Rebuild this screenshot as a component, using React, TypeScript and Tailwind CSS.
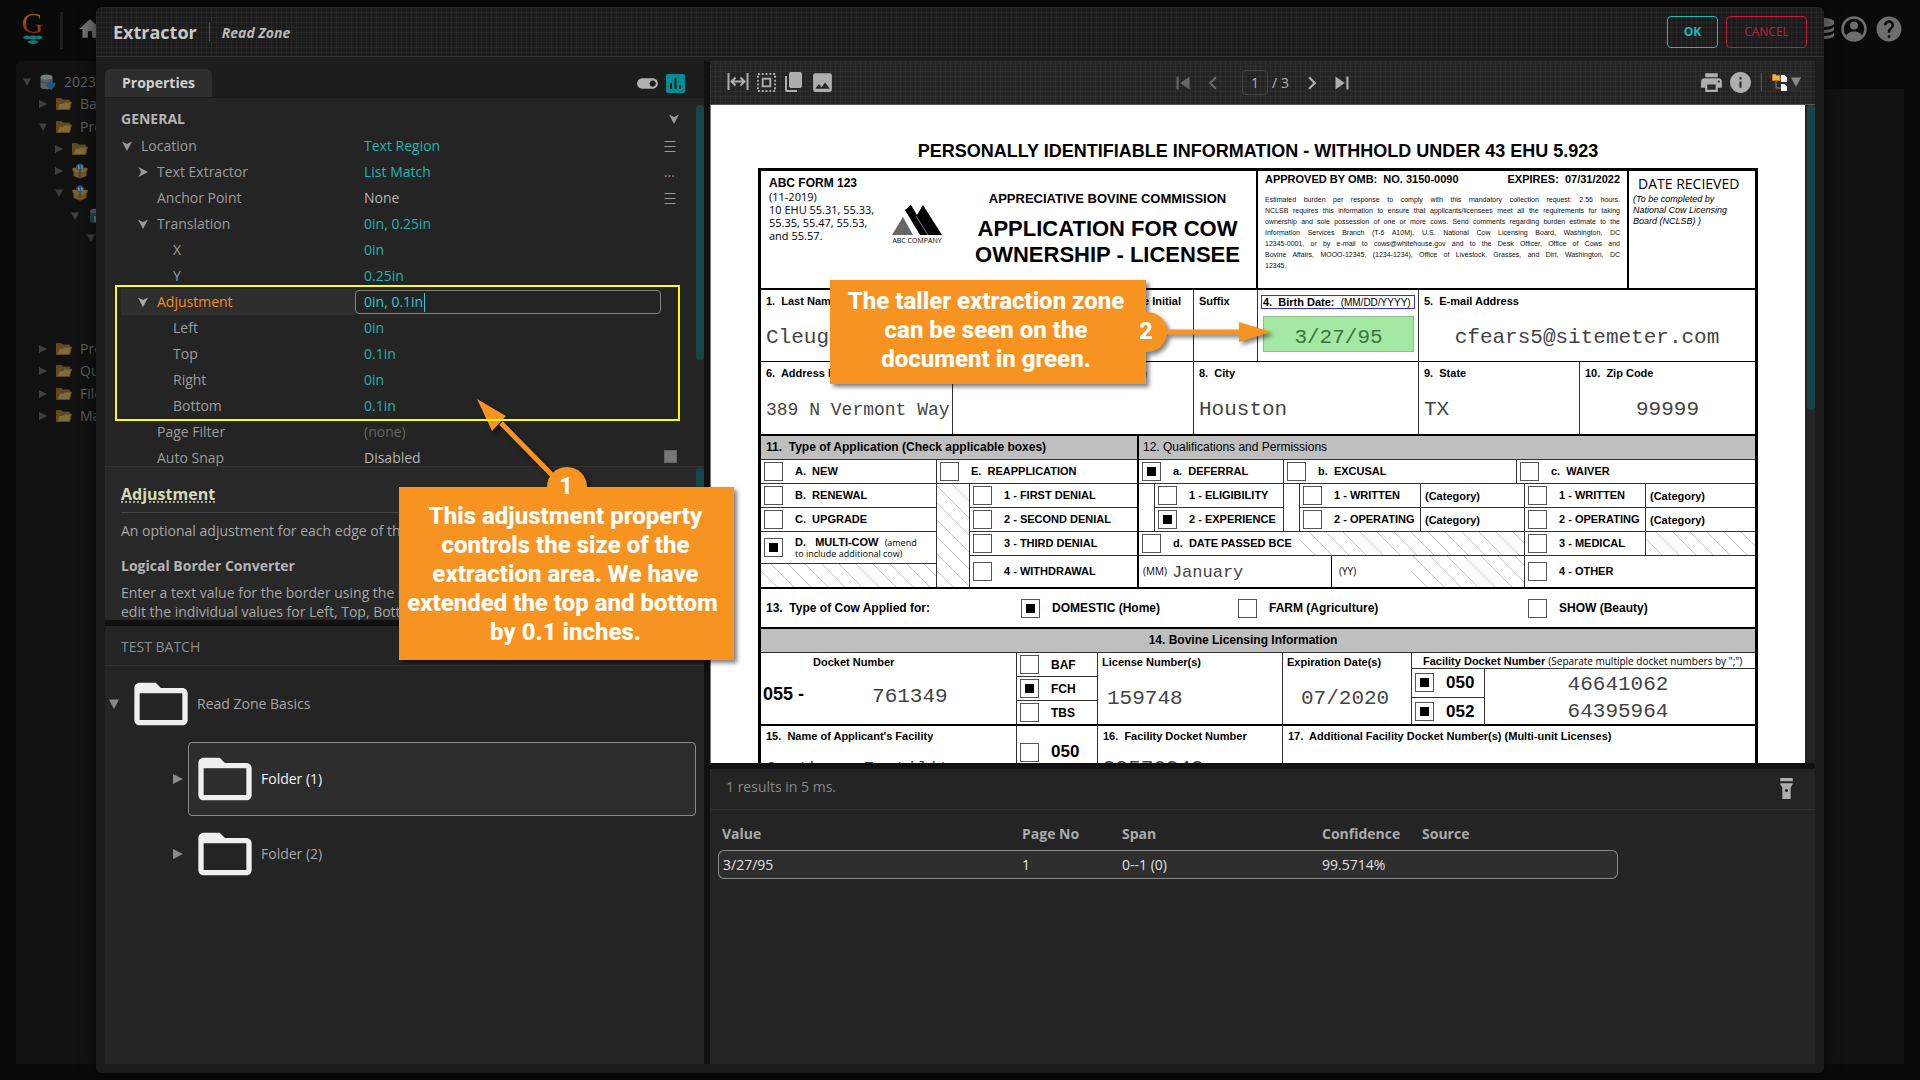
import React from "react";
import {
  MdFolderOpen,
  MdHome,
  MdPrint,
  MdInfo,
  MdHelp,
  MdImage,
  MdSkipPrevious,
  MdSkipNext,
  MdChevronLeft,
  MdChevronRight,
  MdToggleOn,
  MdFlashlightOn,
} from "react-icons/md";

const TEXTURE =
  "bg-[linear-gradient(to_right,rgba(255,255,255,0.035)_1px,transparent_1px),linear-gradient(to_bottom,rgba(255,255,255,0.035)_1px,transparent_1px)] bg-[size:5px_5px]";

const ARIAL = "font-['Liberation_Sans',Arial,sans-serif]";
const MONO = "font-['Liberation_Mono',monospace] text-[#444]";

/* ---------- small drawings ---------- */

function Arrow({ open = true }: { open?: boolean }) {
  return (
    <svg width="10" height="10" viewBox="0 0 10 10" fill="currentColor" className="shrink-0">
      {open ? <path d="M0 0.5 5 3 10 0.5 5 10Z" /> : <path d="M0.5 0 3 5 0.5 10 10 5Z" />}
    </svg>
  );
}

function Triangle({ open, small }: { open: boolean; small?: boolean }) {
  const size = small ? 8 : 10;
  return (
    <svg width={size} height={size} viewBox="0 0 10 10" fill="currentColor" className="shrink-0">
      {open ? <path d="M0 0.5H10L5 10Z" /> : <path d="M0 0 10 5 0 10Z" />}
    </svg>
  );
}

function YellowFolder() {
  return (
    <svg width="16" height="16" viewBox="0 0 16 16" className="shrink-0">
      <path d="M0.5 2.5h5l1 1.5h7v9.500h-13z" fill="#5e4a28" stroke="#69451a" />
      <path d="M1 13.500 3.500 7.500H7l1-1.500h7.500l-2 7.500z" fill="#7d6c3c" stroke="#69451a" />
    </svg>
  );
}

function PackageIcon() {
  return (
    <svg width="16" height="16" viewBox="0 0 16 16" className="shrink-0">
      <circle cx="8" cy="4.500" r="4" fill="#2a5572" />
      <path d="M6 3h1v3M9 3h1v3" stroke="#8aa" fill="none" />
      <path d="M1.500 7.500 8 9.500l6.500-2v5.500L8 15.500 1.500 13z" fill="#74572a" />
      <path d="M0.500 5 3 4.500 8 8.500 5.500 10 0.500 7.500zM15.500 5 13 4.500 8 8.500l2.500 1.500 5-2.500z" fill="#846431" />
      <path d="M8 9v6.500" stroke="#4a3517" />
    </svg>
  );
}

function RootIcon() {
  return (
    <svg width="16" height="16" viewBox="0 0 16 16" className="shrink-0">
      <path d="M0.500 3v10c0 3 12 3 12 0V3z" fill="#5d6264" />
      <ellipse cx="6.500" cy="3" rx="6" ry="2.500" fill="#777e81" />
      <path d="M1 7.500c2 2 9 2 11 0" stroke="#3c4042" fill="none" />
      <path d="m8 8 5 5M7 11l4-3 3 3-3 4zM13 11l2-2" stroke="#23557f" strokeWidth="2" fill="#23557f" />
    </svg>
  );
}

function DatabaseIcon() {
  return (
    <svg width="18" height="16" viewBox="0 0 16 16" className="shrink-0">
      <path d="M1 3v10c0 3 13 3 13 0V3z" fill="#27424f" />
      <ellipse cx="7.500" cy="3" rx="6.500" ry="2.500" fill="#54666e" />
      <path d="M5 8h6v6H5z" fill="#6d7a80" />
      <path d="M8 7l4 3" stroke="#8b3c2c" strokeWidth="2" />
    </svg>
  );
}

function FitWidthIcon() {
  return (
    <svg width="22" height="22" viewBox="0 0 22 22" fill="none" stroke="currentColor" strokeWidth="2">
      <path d="M1.500 2v17M20.500 2v17M5 10.500h12M8.500 6.500 4.500 10.500l4 4M13.500 6.500l4 4-4 4" />
    </svg>
  );
}

function SelectRegionIcon() {
  return (
    <svg width="19" height="19" viewBox="0 0 20 20" fill="none" stroke="currentColor" strokeWidth="2">
      <rect x="1" y="1" width="18" height="18" strokeDasharray="2 2" />
      <rect x="6" y="6" width="8" height="8" />
    </svg>
  );
}

function CopyIcon() {
  return (
    <svg width="20" height="22" viewBox="0 0 20 22" fill="currentColor">
      <rect x="5" y="1" width="13" height="16" rx="2" />
      <path d="M1 5h2v14h10v2H3a2 2 0 0 1-2-2z" />
    </svg>
  );
}

function TreeViewIcon() {
  return (
    <svg width="16" height="18" viewBox="0 0 16 18">
      <path d="M4 7v8h5M4 5.500h5" stroke="#888" fill="none" />
      <path d="M0.500 1.500h3l1 1H8v5H0.500z" fill="#e9b44c" stroke="#c77f1d" />
      <path d="M9 2h3.500L15 4.500V9H9zM9 11h3.500L15 13.500V18H9z" fill="#f4f4f4" />
    </svg>
  );
}

function UserIcon() {
  return (
    <svg width="26" height="26" viewBox="0 0 26 26">
      <circle cx="13" cy="13" r="11.500" fill="none" stroke="#6e6e6e" strokeWidth="2.500" />
      <circle cx="13" cy="9.500" r="4" fill="#6e6e6e" />
      <path d="M5 20c2-6 14-6 16 0-4 5-12 5-16 0z" fill="#6e6e6e" />
    </svg>
  );
}

/* ---------- page behind the dialog ---------- */

type Node = { level: number; open: boolean; icon?: "root" | "folder" | "pkg" | "db"; label: string } | null;

const NODES: Node[] = [
  { level: 0, open: true, icon: "root", label: "2023" },
  { level: 1, open: false, icon: "folder", label: "Batches" },
  { level: 1, open: true, icon: "folder", label: "Projects" },
  { level: 2, open: false, icon: "folder", label: "" },
  { level: 2, open: false, icon: "pkg", label: "" },
  { level: 2, open: true, icon: "pkg", label: "" },
  { level: 3, open: true, icon: "db", label: "" },
  { level: 4, open: true, label: "" },
  null,
  null,
  null,
  null,
  { level: 1, open: false, icon: "folder", label: "Processes" },
  { level: 1, open: false, icon: "folder", label: "Queues" },
  { level: 1, open: false, icon: "folder", label: "File Stores" },
  { level: 1, open: false, icon: "folder", label: "Machines" },
];

const INDENT = ["pl-0", "pl-4", "pl-8", "pl-12", "pl-16"];

function Backdrop() {
  return (
    <div className="flex h-full flex-col bg-[#0a0a0a] pb-4">
      <header className="flex h-[61px] shrink-0 items-start justify-between px-[18px]">
        <div className="flex items-start">
          <div className="ml-1 mt-2 flex w-[21px] flex-col items-center">
            <span className="h-[27px] bg-gradient-to-b from-[#a86a12] to-[#8f1c1c] bg-clip-text font-['Liberation_Serif',serif] text-[30px] leading-[30px] text-transparent">
              G
            </span>
            <svg width="20" height="9" viewBox="0 0 20 9" fill="#0b7f7c">
              <path d="M0 2.500C3 0 5 0 6.500 1.500 8 0 12 0 13.500 1.500 15 0 17 0 20 2.500 17 5 15 4.500 13.500 3.500 12 5 8 5 6.500 3.500 5 4.500 3 5 0 2.500zM4.500 7c3-2.500 8-2.500 11 0-3 2.500-8 2.500-11 0z" />
            </svg>
          </div>
          <div className="ml-[17px] mt-3 h-[37px] w-[3px] bg-[#1c1c1c]" />
          <MdHome size={26} className="ml-[14px] mt-4 text-[#707070]" />
        </div>
        <div className="mt-[14px] flex items-center gap-[9px]">
          <svg width="20" height="22" viewBox="0 0 20 22" fill="#6e6e6e" className="-mr-[2px]">
            <path d="M0 3c3-4 17-4 20 0v3c-3 4-17 4-20 0zM0 9c4 4 16 4 20 0v3c-3 4-17 4-20 0zM0 15c4 4 16 4 20 0v3c-3 4-17 4-20 0z" />
          </svg>
          <UserIcon />
          <MdHelp size={30} className="-mx-[2px] text-[#6e6e6e]" />
        </div>
      </header>
      <div className="flex min-h-0 flex-1 px-4">
        <nav className="w-[300px] rounded-tl-md bg-[#111] pl-[7px] pt-[10px]">
          <ul className="grid h-[356px] auto-rows-fr font-['Open_Sans',sans-serif] text-sm text-[#5f5f5f]">
            {NODES.map((n, i) => (
              <li key={i} className={"flex items-center " + (n ? INDENT[n.level] : "")}>
                {n && (
                  <>
                    <span className="mr-2 flex w-[9px] text-[#404040]">
                      <Triangle open={n.open} small />
                    </span>
                    {n.icon === "root" && <RootIcon />}
                    {n.icon === "folder" && <YellowFolder />}
                    {n.icon === "pkg" && <PackageIcon />}
                    {n.icon === "db" && <DatabaseIcon />}
                    <span className="ml-2 leading-5">{n.label}</span>
                  </>
                )}
              </li>
            ))}
          </ul>
        </nav>
        <div className="mt-7 flex-1 bg-[#111]" />
      </div>
    </div>
  );
}

/* ---------- property grid ---------- */

type RowProps = {
  label: string;
  value: string;
  level: number;
  arrow?: "open" | "closed";
  tone?: "set" | "plain" | "muted";
  end?: React.ReactNode;
};

const ROW_PAD = ["pl-0", "pl-4", "pl-8"];

function Row({ label, value, level, arrow, tone = "set", end }: RowProps) {
  const color = tone === "set" ? "text-[#1fb3b6]" : tone === "plain" ? "text-[#b4b4b4]" : "text-[#666]";
  return (
    <div className="flex h-[26px] items-center">
      <div className={"flex w-[243px] items-center " + ROW_PAD[level]}>
        <span className="flex w-5 pl-px text-[#999]">{arrow && <Arrow open={arrow === "open"} />}</span>
        <span className="text-[#9c9c9c]">{label}</span>
      </div>
      <span className={color}>{value}</span>
      <span className="ml-auto flex w-[18px] justify-start text-[#999]">{end}</span>
    </div>
  );
}

function MenuLines() {
  return (
    <svg width="12" height="11" viewBox="0 0 12 11" stroke="currentColor">
      <path d="M0.500 0.500h11M0.500 5.500h11M0.500 10.500h11" />
    </svg>
  );
}

function Properties() {
  return (
    <section className="flex h-[405px] shrink-0 flex-col overflow-hidden bg-[#242424]">
      <div className="flex h-[37px] shrink-0 items-end justify-between border-b border-[#1a1a1a] bg-[#1d1d1d] pr-[19px]">
        <button className="h-7 w-[107px] rounded-t-md bg-[#2e2e2e] text-sm font-bold text-[#d0d0d0]">Properties</button>
        <div className="mb-px flex items-center gap-[6px] text-[#b0b0b0]">
          <button aria-label="Toggle view">
            <MdToggleOn size={25} />
          </button>
          <button aria-label="Diagnostics" className="text-[#008d92]">
            <svg width="19" height="19" viewBox="0 0 19 19">
              <rect width="19" height="19" rx="2" fill="currentColor" />
              <path d="M5 9v6M9.500 4v11M14 11.500v3.500" stroke="#1d1d1d" strokeWidth="2" />
            </svg>
          </button>
        </div>
      </div>
      <div className="flex min-h-0 flex-1">
        <div className="flex-1 pl-4 pr-[14px] pt-[6px] text-sm">
          <div className="flex h-[29px] items-center justify-between pr-[3px] text-[#999]">
            <h2 className="font-bold text-[#b4b4b4]">GENERAL</h2>
            <Arrow />
          </div>
          <Row label="Location" value="Text Region" level={0} arrow="open" end={<MenuLines />} />
          <Row label="Text Extractor" value="List Match" level={1} arrow="closed" end="..." />
          <Row label="Anchor Point" value="None" level={1} tone="plain" end={<MenuLines />} />
          <Row label="Translation" value="0in, 0.25in" level={1} arrow="open" />
          <Row label="X" value="0in" level={2} />
          <Row label="Y" value="0.25in" level={2} />
          <div className="relative">
            <div className="pointer-events-none absolute -bottom-[2px] -left-[6px] right-[2px] -top-1 z-10 border-2 border-[#ffff00]" />
            <div className="flex h-[26px] items-center">
              <label htmlFor="adj" className="flex h-[26px] w-[234px] items-center bg-[#2e2e2e] pl-4 text-[#f58a1f]">
                <span className="flex w-5 pl-px text-[#aaa]">
                  <Arrow />
                </span>
                Adjustment
              </label>
              <div className="mr-[21px] flex h-6 flex-1 items-center rounded border border-[#808080] bg-[#242424] pl-2 text-[#22c9cf]">
                <input id="adj" defaultValue="0in, 0.1in" className="w-[60px] bg-transparent outline-none" />
                <span className="h-[19px] w-px bg-[#22c9cf]" />
              </div>
            </div>
            <Row label="Left" value="0in" level={2} />
            <Row label="Top" value="0.1in" level={2} />
            <Row label="Right" value="0in" level={2} />
            <Row label="Bottom" value="0.1in" level={2} />
          </div>
          <Row label="Page Filter" value="(none)" level={1} tone="muted" />
          <Row
            label="Auto Snap"
            value="Disabled"
            level={1}
            tone="plain"
            end={
              <input
                type="checkbox"
                aria-label="Auto Snap"
                className="mb-1 h-[13px] w-[13px] appearance-none border border-[#666] bg-[#777]"
              />
            }
          />
        </div>
        <div className="mt-[7px] h-[255px] w-2 rounded bg-[#18454a]" />
      </div>
    </section>
  );
}

function Help() {
  return (
    <section className="flex h-[154px] shrink-0 overflow-hidden border-t border-[#333] bg-[#282828] text-sm text-[#a6a6a6]">
      <div className="min-w-0 flex-1 pl-4 pr-3">
        <h3 className="mt-[15px] h-[31px] border-b border-[#444] text-base leading-6 font-bold text-[#d6d9b4] underline decoration-dotted underline-offset-2">
          Adjustment
        </h3>
        <p className="mt-2 whitespace-nowrap leading-[19px]">An optional adjustment for each edge of the region.</p>
        <h4 className="mt-4 font-bold leading-[19px] text-[#b4b4b4]">Logical Border Converter</h4>
        <p className="mt-2 whitespace-nowrap leading-[19px]">
          Enter a text value for the border using the syntax shown, or
          <br />
          edit the individual values for Left, Top, Bottom and Right.
        </p>
      </div>
      <div className="h-[100px] w-2 rounded bg-[#18454a]" />
    </section>
  );
}

function TestBatch() {
  return (
    <section className="flex-1 bg-[#242424] text-sm text-[#a6a6a6]">
      <h3 className="flex h-10 items-center border-b border-[#333] pl-4 pt-[3px] text-[#8c8c8c]">TEST BATCH</h3>
      <div className="flex h-[75px] items-center pl-1">
        <span className="text-[#8a8a8a]">
          <Triangle open />
        </span>
        <MdFolderOpen size={64} className="ml-[10px] text-[#efefef]" />
        <span className="ml-1">Read Zone Basics</span>
      </div>
      {["Folder (1)", "Folder (2)"].map((f, i) => (
        <div key={f} className="flex h-[75px] items-center pl-[68px] pr-2">
          <span className="text-[#8a8a8a]">
            <Triangle open={false} />
          </span>
          <div
            className={
              "ml-[5px] flex h-[74px] flex-1 items-center rounded border " +
              (i === 0 ? "border-[#8a8a8a] bg-[#2d2d2d] font-medium text-[#f2f2f2]" : "border-transparent")
            }
          >
            <MdFolderOpen size={64} className="ml-1 text-[#efefef]" />
            <span className="ml-1">{f}</span>
          </div>
        </div>
      ))}
    </section>
  );
}

/* ---------- scanned form ---------- */

const HATCH =
  "bg-[repeating-linear-gradient(45deg,transparent_0px,transparent_11px,#c8c8c8_11px,#c8c8c8_12px)]";

type CheckProps = { label?: React.ReactNode; checked?: boolean; className?: string };

function Check({ label, checked, className = "" }: CheckProps) {
  return (
    <label className={"flex items-center gap-3 whitespace-nowrap pl-[3px] " + className}>
      <input
        type="checkbox"
        defaultChecked={checked}
        className="h-[19px] w-[19px] shrink-0 appearance-none border border-[#555] bg-white checked:bg-black checked:shadow-[inset_0_0_0_4px_white]"
      />
      {label}
    </label>
  );
}

const L = "border-l border-[#333]";
const B = "border-b border-[#333]";
const NAME = "whitespace-pre pl-[5px] pt-1 text-[11px] leading-[14px] font-bold";

const BURDEN = [
  "Estimated burden per response to comply with this mandatory collection request: 2.56 hours.",
  "NCLSB requires this information to ensure that applicants/licensees meet all the requirements for taking",
  "ownership and sole possession of one or more cows. Send comments regarding burden estimate to the",
  "Information Services Branch (T-6 A10M), U.S. National Cow Licensing Board, Washington, DC",
  "12345-0001, or by e-mail to cows@whitehouse.gov and to the Desk Officer, Office of Cows and",
  "Bovine Affairs, MOOO-12345, (1234-1234), Office of Livestock, Grasses, and Dirt, Washington, DC",
];

function Form() {
  return (
    <div className={"mx-auto w-[1000px] pt-9 text-black " + ARIAL}>
      <h1 className="mb-[7px] whitespace-nowrap text-center text-[18px] leading-5 font-bold">
        PERSONALLY IDENTIFIABLE INFORMATION - WITHHOLD UNDER 43 EHU 5.923
      </h1>
      <div className="border-x-[3px] border-t-[3px] border-black">
        {/* heading */}
        <div className="flex h-[119px] border-b-2 border-black">
          <div className="w-[120px] flex-none whitespace-nowrap pl-2 pt-[6px] font-['Open_Sans',sans-serif] text-[11px] leading-[13px]">
            <div className={"text-[12px] font-bold leading-[13px] " + ARIAL}>ABC FORM 123</div>
            (11-2019)
            <br />
            10 EHU 55.31, 55.33,
            <br />
            55.35, 55.47, 55.53,
            <br />
            and 55.57.
          </div>
          <div className="mt-[33px] flex w-[72px] flex-col items-center">
            <svg width="50" height="32" viewBox="0 0 50 32">
              <path d="M0 31 11 13 21 31z" fill="#666" />
              <path d="M13 6 19 1 25 11 31 1 50 31H28z" />
              <path d="m24 12 12 19" stroke="#fff" strokeWidth="0.500" />
            </svg>
            <span className="whitespace-nowrap font-['Open_Sans',sans-serif] text-[7px] leading-[10px]">ABC COMPANY</span>
          </div>
          <div className="flex-1 pl-[6px] pt-5 text-center font-bold">
            <div className="text-[13px] leading-4">APPRECIATIVE BOVINE COMMISSION</div>
            <div className="mt-[9px] whitespace-nowrap text-[22px] leading-[26px]">
              APPLICATION FOR COW
              <br />
              OWNERSHIP - LICENSEE
            </div>
          </div>
          <div className="w-[371px] shrink-0 border-l-2 border-black px-[7px] pt-[2px]">
            <div className="flex justify-between whitespace-pre text-[11px] leading-[13px] font-bold">
              <span>APPROVED BY OMB:  NO. 3150-0090</span>
              <span>EXPIRES:  07/31/2022</span>
            </div>
            <div className="mt-2 text-[7px] leading-[11px] text-[#111]">
              {BURDEN.map((l) => (
                <div key={l} className="whitespace-nowrap text-justify [text-align-last:justify]">
                  {l}
                </div>
              ))}
              <div>12345.</div>
            </div>
          </div>
          <div className="w-[128px] shrink-0 border-l-2 border-black pl-1 pt-[3px]">
            <div className="pl-[5px] font-['Open_Sans',sans-serif] text-[14px] leading-5">DATE RECIEVED</div>
            <div className="text-[9px] italic leading-[11px]">
              (To be completed by
              <br />
              National Cow Licensing
              <br />
              Board (NCLSB) )
            </div>
          </div>
        </div>
        {/* person */}
        <div className="flex h-[72px] border-b border-black">
          <div className="w-[301px]">
            <div className={NAME}>1.  Last Name</div>
            <div className={"mt-[18px] pl-[5px] text-[21px] leading-6 " + MONO}>Cleugh</div>
          </div>
          <div className="flex w-[131px] justify-end">
            <div className={NAME + " pr-3"}>Middle Initial</div>
          </div>
          <div className={"w-[64px] " + L}>
            <div className={NAME}>Suffix</div>
          </div>
          <div className={"w-[161px] pl-[3px] pt-[5px] " + L}>
            <div className="flex h-[14px] w-[154px] items-center whitespace-pre border border-[#3030e0] pl-px text-[11px] font-bold">
              4.  Birth Date:  <span className="text-[10px] font-normal">(MM/DD/YYYY)</span>
            </div>
            <div className="ml-[2px] mt-[7px] flex h-9 w-[151px] items-center justify-center border border-[#8fb98f] bg-[#a3e8a3] pt-2 font-['Liberation_Mono',monospace] text-[21px] text-[#3a763a]">
              3/27/95
            </div>
          </div>
          <div className={"flex-1 " + L}>
            <div className={NAME}>5.  E-mail Address</div>
            <div className={"mt-[18px] text-center text-[21px] leading-6 " + MONO}>cfears5@sitemeter.com</div>
          </div>
        </div>
        {/* address */}
        <div className="flex h-[74px] border-b-2 border-black">
          <div className="w-[191px]">
            <div className={NAME}>6.  Address Line 1</div>
            <div className={"mt-[18px] whitespace-nowrap pl-[5px] text-[18px] leading-6 " + MONO}>389 N Vermont Way</div>
          </div>
          <div className={"flex w-[241px] justify-end " + L}>
            <div className={NAME + " pr-[46px]"}>7.  Address Line 2 (optional)</div>
          </div>
          <div className={"w-[225px] " + L}>
            <div className={NAME}>8.  City</div>
            <div className={"mt-[18px] pl-[5px] text-[21px] leading-6 " + MONO}>Houston</div>
          </div>
          <div className={"w-[161px] " + L}>
            <div className={NAME}>9.  State</div>
            <div className={"mt-[18px] pl-[5px] text-[21px] leading-6 " + MONO}>TX</div>
          </div>
          <div className={"flex-1 " + L}>
            <div className={NAME}>10.  Zip Code</div>
            <div className={"mt-[18px] text-center text-[21px] leading-6 " + MONO}>99999</div>
          </div>
        </div>
        {/* 11 and 12 */}
        <div className="flex h-[153px] border-b-2 border-black text-[11px] font-bold">
          <div className="flex w-[376px] flex-col">
            <div className={"h-6 whitespace-pre bg-[#bfbfbf] pl-[5px] text-[12px] leading-[23px] " + B}>
              11.  Type of Application (Check applicable boxes)
            </div>
            <div className="flex flex-1">
              <div className="flex w-[175px] flex-col">
                <Check label="A.  NEW" className={"h-6 whitespace-pre " + B} />
                <Check label="B.  RENEWAL" className={"h-6 whitespace-pre " + B} />
                <Check label="C.  UPGRADE" className={"h-6 whitespace-pre " + B} />
                <Check
                  checked
                  className={"h-8 " + B}
                  label={
                    <span className="leading-[11px]">
                      <span className="whitespace-pre">D.   MULTI-COW  </span>
                      <span className="font-['Open_Sans',sans-serif] text-[9px] font-normal">
                        (amend
                        <br />
                        to include additional cow)
                      </span>
                    </span>
                  }
                />
                <div className={"flex-1 " + HATCH} />
              </div>
              <div className={"flex flex-1 flex-col " + L}>
                <Check label="E.  REAPPLICATION" className={"h-6 whitespace-pre " + B} />
                <div className="flex flex-1">
                  <div className={"w-8 " + HATCH} />
                  <div className={"flex flex-1 flex-col " + L}>
                    <Check label="1 - FIRST DENIAL" className={"h-6 " + B} />
                    <Check label="2 - SECOND DENIAL" className={"h-6 " + B} />
                    <Check label="3 - THIRD DENIAL" className={"h-6 " + B} />
                    <Check label="4 - WITHDRAWAL" className="flex-1" />
                  </div>
                </div>
              </div>
            </div>
          </div>
          <div className="flex flex-1 flex-col border-l-2 border-black">
            <div className={"h-6 bg-[#bfbfbf] pl-[4px] text-[12px] font-normal leading-[23px] " + B}>
              12. Qualifications and Permissions
            </div>
            <div className="flex h-6">
              <Check checked label="a.  DEFERRAL" className={"w-[144px] whitespace-pre " + B} />
              <Check label="b.  EXCUSAL" className={"w-[233px] whitespace-pre " + L + " " + B} />
              <Check label="c.  WAIVER" className={"flex-1 whitespace-pre " + L + " " + B} />
            </div>
            <div className="flex flex-1">
              <div className="flex w-[385px] flex-col">
                <div className={"flex h-12 " + B}>
                  <div className={"ml-[15px] flex w-[129px] flex-col " + L}>
                    <Check label="1 - ELIGIBILITY" className={"h-6 " + B} />
                    <Check checked label="2 - EXPERIENCE" className="flex-1" />
                  </div>
                  <div className={"w-4 " + L} />
                  <div className={"flex w-[121px] flex-col " + L}>
                    <Check label="1 - WRITTEN" className={"h-6 " + B} />
                    <Check label="2 - OPERATING" className="flex-1" />
                  </div>
                  <div className={"flex flex-1 flex-col " + L}>
                    <div className={"h-6 pl-1 leading-6 " + B}>(Category)</div>
                    <div className="pl-1 leading-6">(Category)</div>
                  </div>
                </div>
                <div className={"flex h-6 " + B}>
                  <Check label="d.  DATE PASSED BCE" className="w-[160px] whitespace-pre" />
                  <div className={"flex-1 " + HATCH} />
                </div>
                <div className="flex flex-1 font-['Open_Sans',sans-serif] text-[10px] font-normal">
                  <div className="flex w-[192px] items-center gap-[5px] pl-1">
                    (MM) <span className={"pt-[2px] text-[17px] leading-6 " + MONO}>January</span>
                  </div>
                  <div className="flex w-[80px] items-center border-l border-black pl-[7px]">(YY)</div>
                  <div className={"flex-1 " + HATCH} />
                </div>
              </div>
              <div className={"flex flex-1 flex-col " + L}>
                <div className="flex h-12">
                  <div className={"flex w-[120px] flex-col " + B}>
                    <Check label="1 - WRITTEN" className={"h-6 " + B} />
                    <Check label="2 - OPERATING" className="flex-1" />
                  </div>
                  <div className={"flex flex-1 flex-col " + L + " " + B}>
                    <div className={"h-6 pl-1 leading-6 " + B}>(Category)</div>
                    <div className="pl-1 leading-6">(Category)</div>
                  </div>
                </div>
                <div className={"flex h-6 " + B}>
                  <Check label="3 - MEDICAL" className="w-[120px]" />
                  <div className={"flex-1 " + L + " " + HATCH} />
                </div>
                <Check label="4 - OTHER" className="flex-1" />
              </div>
            </div>
          </div>
        </div>
        {/* 13 */}
        <div className="flex h-10 items-center border-b-2 border-black text-[12px] font-bold">
          <div className="w-[257px] whitespace-pre pl-[5px]">13.  Type of Cow Applied for:</div>
          <Check checked label="DOMESTIC (Home)" className="w-[217px]" />
          <Check label="FARM (Agriculture)" className="w-[290px]" />
          <Check label="SHOW (Beauty)" />
        </div>
        {/* 14 */}
        <div className={"h-6 bg-[#bfbfbf] pr-[30px] text-center text-[12px] font-bold leading-[23px] " + B}>
          14. Bovine Licensing Information
        </div>
        <div className="flex h-[73px] border-b-2 border-black text-[12px] font-bold">
          <div className="w-[255px] shrink-0">
            <div className="pl-[52px] pt-[2px] text-[11px] leading-[14px]">Docket Number</div>
            <div className="mt-2 flex items-center pl-[2px] text-[18px] leading-7">
              055 - <span className={"ml-[68px] pt-[6px] text-[21px] font-normal leading-7 " + MONO}>761349</span>
            </div>
          </div>
          <div className={"flex w-[81px] shrink-0 flex-col " + L}>
            <Check label="BAF" className={"h-6 " + B} />
            <Check checked label="FCH" className={"h-6 " + B} />
            <Check label="TBS" className="flex-1" />
          </div>
          <div className={"w-[185px] shrink-0 pl-1 pt-[2px] text-[11px] leading-[14px] " + L}>
            License Number(s)
            <div className={"mt-[10px] pl-[5px] text-[21px] font-normal leading-10 " + MONO}>159748</div>
          </div>
          <div className={"w-[129px] shrink-0 pl-1 pt-[2px] text-[11px] leading-[14px] " + L}>
            Expiration Date(s)
            <div className={"mt-[10px] pl-[14px] text-[21px] font-normal leading-10 " + MONO}>07/2020</div>
          </div>
          <div className={"flex min-w-0 flex-1 flex-col " + L}>
            <div className={"h-4 whitespace-nowrap pl-[11px] text-[11px] leading-4 " + B}>
              Facility Docket Number{" "}
              <span className="font-['Open_Sans',sans-serif] text-[10px] font-normal">
                (Separate multiple docket numbers by ";")
              </span>
            </div>
            <div className="flex flex-1">
              <div className="flex w-[72px] flex-col text-[17px]">
                <Check checked label="050" className={"flex-1 " + B} />
                <Check checked label="052" className="flex-1" />
              </div>
              <div className={"flex-1 pr-1 pt-[2px] text-center text-[21px] font-normal leading-[27px] " + L + " " + MONO}>
                46641062
                <br />
                64395964
              </div>
            </div>
          </div>
        </div>
        <div className="-mt-px flex h-[120px]">
          <div className="w-[255px]">
            <div className={NAME}>15.  Name of Applicant's Facility</div>
            <div className={"mt-[14px] pl-[5px] text-[18px] leading-6 " + MONO}>Carthage Fertility</div>
          </div>
          <div className={"flex w-[81px] flex-col text-[17px] font-bold " + L}>
            <Check label="050" className="h-[54px]" />
          </div>
          <div className={"w-[185px] " + L}>
            <div className={NAME}>16.  Facility Docket Number</div>
            <div className={"mt-[14px] pl-[5px] text-[21px] leading-6 " + MONO}>99570949</div>
          </div>
          <div className={"flex-1 " + L}>
            <div className={NAME}>17.  Additional Facility Docket Number(s) (Multi-unit Licenses)</div>
          </div>
        </div>
      </div>
    </div>
  );
}

function Viewer() {
  return (
    <section className="flex h-[702px] shrink-0 flex-col">
      <div
        className={
          "grid h-[44px] shrink-0 grid-cols-3 items-center border-b border-[#555] bg-[#242424] pl-[17px] pr-[14px] text-[#aeaeae] " +
          TEXTURE
        }
      >
        <div className="flex items-center gap-2 pb-px">
          <button aria-label="Fit width"><FitWidthIcon /></button>
          <button aria-label="Select region"><SelectRegionIcon /></button>
          <button aria-label="Pages"><CopyIcon /></button>
          <button aria-label="Image"><MdImage size={25} className="-ml-[2px]" /></button>
        </div>
        <div className="flex items-center justify-center pr-[3px] text-sm">
          <button aria-label="First page" className="text-[#666]"><MdSkipPrevious size={26} /></button>
          <button aria-label="Previous page" className="ml-1 text-[#666]"><MdChevronLeft size={26} /></button>
          <input
            aria-label="Page"
            defaultValue="1"
            className="ml-4 h-[25px] w-[26px] rounded border border-[#444] bg-transparent text-center"
          />
          <span className="ml-1">/ 3</span>
          <button aria-label="Next page" className="ml-[10px]"><MdChevronRight size={26} /></button>
          <button aria-label="Last page" className="ml-1"><MdSkipNext size={26} /></button>
        </div>
        <div className="flex items-center justify-end pb-px">
          <button aria-label="Print"><MdPrint size={25} /></button>
          <button aria-label="Information" className="ml-1"><MdInfo size={25} /></button>
          <span className="ml-2 h-[18px] w-px bg-[#555]" />
          <button aria-label="Tree view" className="ml-[10px] flex items-center gap-[3px] rounded bg-[#2c2c2c] text-[#888]">
            <TreeViewIcon />
            <Triangle open />
          </button>
        </div>
      </div>
      <div className="flex min-h-0 flex-1 bg-[#242424]">
        <div className="flex-1 overflow-hidden border-l border-[#777] bg-white">
          <Form />
        </div>
        <div className="ml-[2px] h-[305px] w-2 rounded bg-[#18454a]" />
      </div>
    </section>
  );
}

function Results() {
  return (
    <section className="flex-1 bg-[#242424] text-sm">
      <div className="flex h-[41px] items-center justify-between border-b border-[#333] px-4 pb-1">
        <span className="text-[#888]">1 results in 5 ms.</span>
        <button aria-label="Highlight" className="pt-[2px] text-[#aeaeae]"><MdFlashlightOn size={25} /></button>
      </div>
      <table className="ml-2 mt-[10px] w-[900px] table-fixed border-separate border-spacing-0 text-left">
        <thead className="text-[#aaa]">
          <tr className="h-[30px] [&>th]:pb-[2px] [&>th]:pl-1">
            <th className="w-[300px]">Value</th>
            <th className="w-[100px]">Page No</th>
            <th className="w-[200px]">Span</th>
            <th className="w-[100px]">Confidence</th>
            <th>Source</th>
          </tr>
        </thead>
        <tbody className="text-[#e0e0e0]">
          <tr className="h-[29px] [&>td]:border-y [&>td]:border-[#8a8a8a] [&>td]:bg-[#2e2e2e] [&>td]:pl-1">
            <td className="rounded-l-md border-l">3/27/95</td>
            <td>1</td>
            <td>0--1 (0)</td>
            <td>99.5714%</td>
            <td className="rounded-r-md border-r" />
          </tr>
        </tbody>
      </table>
    </section>
  );
}

/* ---------- callouts ---------- */

const SHADOW = "drop-shadow-[3px_3px_2px_rgba(0,0,0,0.5)]";

function Callouts() {
  return (
    <div className="pointer-events-none font-['Roboto',sans-serif] text-[24px] font-extrabold leading-[29px] text-white">
      <div className={"absolute left-[303px] top-[480px] w-[335px] " + SHADOW}>
        <svg width="120" height="110" viewBox="0 0 120 110" fill="#f79421" className="absolute -top-[88px] left-[74px]">
          <circle cx="94" cy="88" r="20" />
          <path d="M80 77 28 24" stroke="#f79421" strokeWidth="5" />
          <path d="M4 0 33 17 19 32Z" />
        </svg>
        <div className="relative h-[173px] whitespace-nowrap bg-[#f79421] pr-[2px] pt-[15px] text-center">
          This adjustment property
          <br />
          controls the size of the
          <br />
          extraction area. We have
          <br />
          extended the top and bottom&nbsp;
          <br />
          by 0.1 inches.
        </div>
        <span className="absolute -top-[15px] left-[160px]">1</span>
      </div>
      <div className={"absolute left-[734px] top-[273px] w-[316px] " + SHADOW}>
        <svg width="150" height="50" viewBox="0 0 150 50" fill="#f79421" className="absolute left-[296px] top-[27px]">
          <circle cx="21" cy="25" r="20" />
          <path d="M38 25H120" stroke="#f79421" strokeWidth="5" />
          <path d="M113 15 145 25 113 35Z" />
        </svg>
        <div className="relative h-[104px] whitespace-nowrap bg-[#f79421] pr-1 pt-[7px] text-center">
          The taller extraction zone
          <br />
          can be seen on the
          <br />
          document in green.
        </div>
        <span className="absolute left-[309px] top-[37px]">2</span>
      </div>
    </div>
  );
}

export default function App() {
  return (
    <div className="relative h-screen overflow-hidden bg-[#0a0a0a]">
      <Backdrop />
      <div
        role="dialog"
        aria-label="Extractor"
        className="absolute inset-x-24 inset-y-[7px] flex flex-col rounded-md bg-[#1c1c1c] font-['Open_Sans',sans-serif] shadow-[0_0_16px_rgba(0,0,0,0.6)]"
      >
        <header
          className={
            "flex h-[50px] shrink-0 items-center justify-between rounded-t-md border-b border-[#333] bg-[#1c1c1c] px-[17px] " +
            TEXTURE
          }
        >
          <div className="flex items-center">
            <h1 className="text-lg font-bold text-[#c8c8c8]">Extractor</h1>
            <span className="mx-3 h-[18px] w-px bg-[#555]" />
            <span className="pt-[2px] text-sm font-bold italic text-[#b8b8b8]">Read Zone</span>
          </div>
          <div className="flex gap-2 text-xs">
            <button className="h-8 w-[51px] rounded border border-[#1fb5ba] font-bold text-[#1fb5ba]">OK</button>
            <button className="h-8 w-[81px] rounded border border-[#c01c40] font-medium text-[#c01c40]">CANCEL</button>
          </div>
        </header>
        <div className="flex min-h-0 flex-1 rounded-b-md bg-[#1c1c1c] px-[9px] pb-[9px] pt-1">
          <div className="flex w-[599px] shrink-0 flex-col">
            <Properties />
            <Help />
            <div className="h-[6px] shrink-0 bg-[#111]" />
            <TestBatch />
          </div>
          <div className="w-[6px] shrink-0 bg-[#111]" />
          <div className="flex min-w-0 flex-1 flex-col">
            <Viewer />
            <div className="h-[6px] shrink-0 bg-[#111]" />
            <Results />
          </div>
        </div>
        <Callouts />
      </div>
    </div>
  );
}
